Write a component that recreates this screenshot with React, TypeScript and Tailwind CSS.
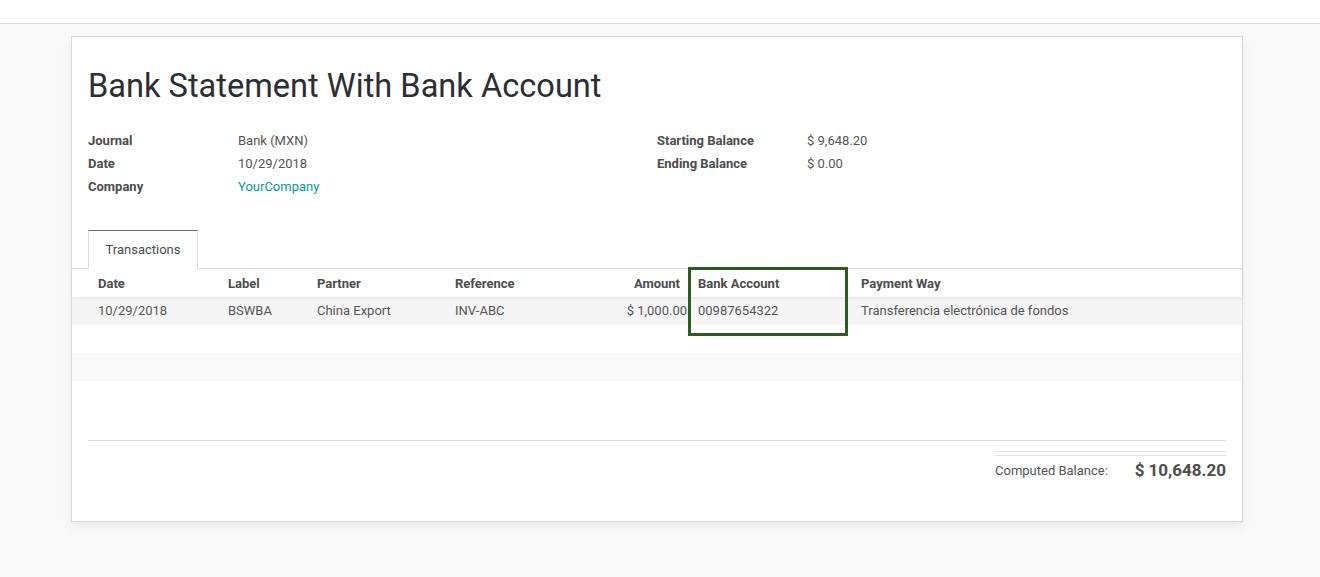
const font = { fontFamily: 'Roboto, "Noto Sans", sans-serif' };

const Field = ({ label, value, link }: { label: string; value: string; link?: boolean }) => (
  <div className="flex h-[23px] items-center text-[13px]">
    <span className="w-[150px] font-bold text-[#4c4c4c]">{label}</span>
    <span className={link ? 'text-[#00a09d]' : 'text-[#555555]'}>{value}</span>
  </div>
);

const cols = [
  { key: 'date', label: 'Date', w: 'w-[130px] pl-2' },
  { key: 'label', label: 'Label', w: 'w-[89px] pl-2' },
  { key: 'partner', label: 'Partner', w: 'w-[138px] pl-2' },
  { key: 'ref', label: 'Reference', w: 'w-[143px] pl-2' },
  { key: 'amount', label: 'Amount', w: 'w-[100px] pr-[10px] text-right' },
  { key: 'bank', label: 'Bank Account', w: 'w-[163px] pl-2' },
  { key: 'way', label: 'Payment Way', w: 'flex-1 pl-2' },
];

const row: Record<string, string> = {
  date: '10/29/2018',
  label: 'BSWBA',
  partner: 'China Export',
  ref: 'INV-ABC',
  amount: '$ 1,000.00',
  bank: '00987654322',
  way: 'Transferencia electrónica de fondos',
};

export default function App() {
  return (
    <div className="flex h-[577px] w-full flex-col bg-[#f9f9f9]" style={font}>
      <div className="h-[24px] border-b border-[#dddddd] bg-white" />
      <div className="pl-[71px] pt-[12px]">
        <div className="relative h-[486px] w-[1172px] border border-[#d9d9d9] bg-white shadow-[0_5px_10px_rgba(0,0,0,0.06)]">
          <div className="px-4 pt-[29px]">
            <h1 className="text-[32.6px] leading-[40px] text-[#2b2e33]">Bank Statement With Bank Account</h1>
            <div className="mt-[23px] flex">
              <div className="w-[569px]">
                <Field label="Journal" value="Bank (MXN)" />
                <Field label="Date" value="10/29/2018" />
                <Field label="Company" value="YourCompany" link />
              </div>
              <div>
                <Field label="Starting Balance" value="$ 9,648.20" />
                <Field label="Ending Balance" value="$ 0.00" />
              </div>
            </div>
            <div className="mt-[32px] flex">
              <div className="-mb-px flex h-[39px] w-[110px] items-center justify-center border-x border-t border-[#dddddd] border-t-[#7c5e79] bg-white text-[13px] text-[#4c4c4c]">
                Transactions
              </div>
            </div>
          </div>
          <div className="border-t border-[#dddddd]">
            <div className="relative z-10 flex h-[28px] items-center bg-white pl-[18px] pt-[1px] text-[13px] font-bold text-[#4c4c4c] shadow-[0_2px_3px_rgba(0,0,0,0.05)]">
              {cols.map((c) => (
                <div key={c.key} className={c.w}>
                  {c.label}
                </div>
              ))}
            </div>
            <div className="flex h-[28px] items-center bg-[#f5f5f5] pl-[18px] text-[13px] text-[#555555]">
              {cols.map((c) => (
                <div key={c.key} className={c.key === 'amount' ? 'w-[100px] pr-[3px] text-right' : c.w}>
                  {row[c.key]}
                </div>
              ))}
            </div>
            <div className="h-[28px]" />
            <div className="h-[28px] bg-[#f9f9f9]" />
          </div>
          <div className="mx-4 mt-[59px] border-t border-[#dddddd]" />
          <div className="mr-4 mt-[10px] flex justify-end">
            <div className="w-[231px]">
              <div className="h-[5px] border-y border-[#e5e5e5]" />
              <div className="flex items-center justify-between pt-[2px]">
                <span className="text-[13px] text-[#555555]">Computed Balance:</span>
                <span className="text-[17px] font-bold text-[#4c4c4c]">$ 10,648.20</span>
              </div>
            </div>
          </div>
          <div className="absolute left-[616px] top-[230px] z-20 h-[69px] w-[160px] border-[3px] border-[#2d5a20]" />
        </div>
      </div>
    </div>
  );
}
